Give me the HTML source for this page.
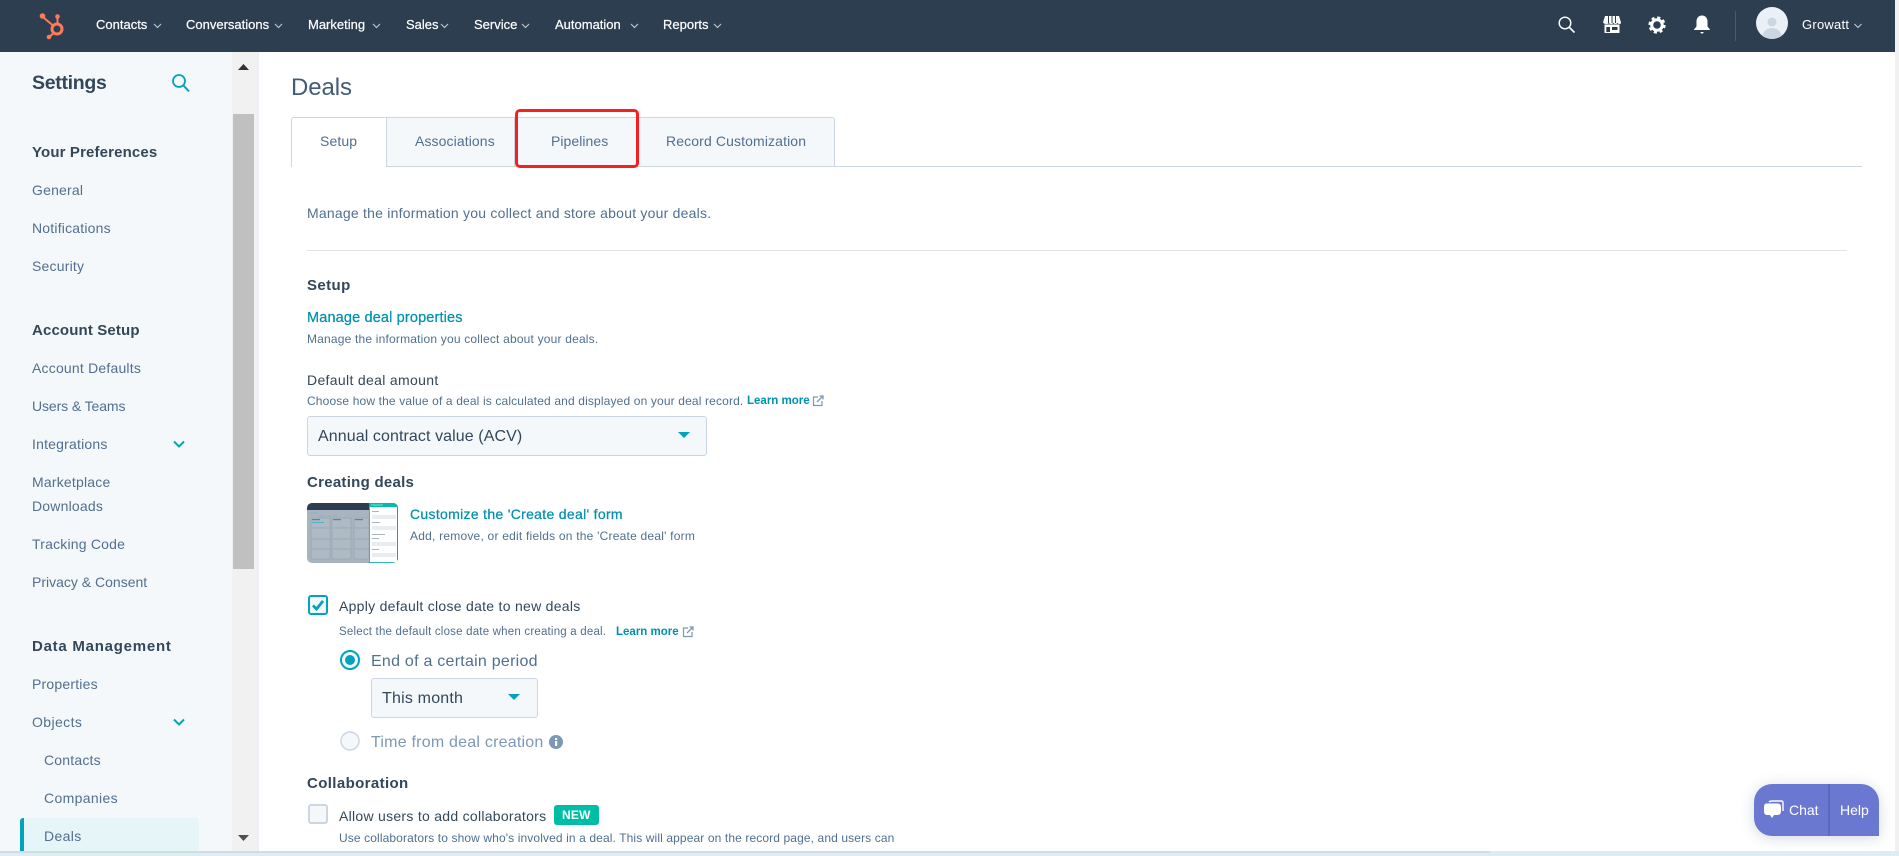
<!DOCTYPE html>
<html><head><meta charset="utf-8"><title>Deals</title>
<style>
html,body{margin:0;padding:0}
body{width:1899px;height:856px;overflow:hidden;position:relative;background:#fff;font-family:"Liberation Sans",sans-serif;color:#33475b}
div,a,span.t{box-sizing:border-box}
.t{position:absolute;white-space:nowrap;line-height:20px}
.n{color:#fff;font-size:13px;top:15px;letter-spacing:0;-webkit-text-stroke:.2px #fff}
.s{font-size:14px;color:#516f90;letter-spacing:.2px;left:32px}
.h{font-size:15px;font-weight:bold;color:#33475b;letter-spacing:.14px;left:32px}
.sub{font-size:12px;color:#516f90}
.l{color:#0091ae}
.box{position:absolute;background:#f5f8fa;border:1px solid #cbd6e2;border-radius:3px}
.tab{position:absolute;top:117px;height:50px;background:#f5f8fa;border:1px solid #cbd6e2;border-left:0}
.tt{font-size:14px;color:#516f90;letter-spacing:.1px;top:131px}
.caret{position:absolute;width:0;height:0;border-left:6.5px solid transparent;border-right:6.5px solid transparent;border-top:6.5px solid #00a4bd}
svg{position:absolute;overflow:visible}
</style></head><body>

<!-- top nav -->
<div style="position:absolute;left:0;top:0;width:1895px;height:52px;background:#2d3e50"></div>
<svg style="left:38px;top:12px" width="30" height="30" viewBox="38 12 30 30"><g fill="none" stroke="#ff7a59"><circle cx="57" cy="29" r="5" stroke-width="3"/><path d="M57.500 18V24M44 18L53 25.500M50 36.500L54 32.500" stroke-width="2"/></g><g fill="#ff7a59"><circle cx="57.500" cy="16.500" r="2.300"/><circle cx="42.500" cy="16" r="2.800"/><circle cx="49" cy="37" r="2.300"/></g></svg>

<span class="t n" style="left:96px">Contacts</span>
<span class="t n" style="left:186px">Conversations</span>
<span class="t n" style="left:308px">Marketing</span>
<span class="t n" style="left:406px">Sales</span>
<span class="t n" style="left:474px">Service</span>
<span class="t n" style="left:555px">Automation</span>
<span class="t n" style="left:663px">Reports</span>
<svg style="left:0;top:0" width="800" height="52"><g fill="none" stroke="#b7c3cf" stroke-width="1.200"><path d="M154 24l3.500 3.500 3.500-3.500M275 24l3.500 3.500 3.500-3.500M373 24l3.500 3.500 3.500-3.500M441 24l3.500 3.500 3.500-3.500M522 24l3.500 3.500 3.500-3.500M631 24l3.500 3.500 3.500-3.500M714 24l3.500 3.500 3.500-3.500"/></g></svg>

<!-- top right icons -->
<svg style="left:1558px;top:16px" width="18" height="18" viewBox="0 0 18 18"><circle cx="7" cy="7" r="5.800" fill="none" stroke="#fff" stroke-width="1.400"/><path d="M11.200 11.200L16.500 16.500" stroke="#fff" stroke-width="1.600"/></svg>
<svg style="left:1603px;top:16px" width="18" height="18" viewBox="0 0 18 18"><path d="M2 0H16L18 6.500Q18 8 16.500 8Q15 8 14.500 7Q13.500 8 12.500 8Q11 8 10.500 7Q9.500 8 8 8Q6.500 8 6 7Q5 8 3.500 8Q1 8 0 6.500Z" fill="#fff"/><path d="M5.500 0V7M9 0V7M12.500 0V7" stroke="#2d3e50" stroke-width="1"/><path d="M1.500 8.500H16.500V17H1.500ZM3.300 11V16H7V11ZM9 11V14H14.500V11Z" fill="#fff" fill-rule="evenodd"/></svg>
<svg style="left:1648px;top:16px" width="18" height="18" viewBox="0 0 18 18"><circle cx="9" cy="9" r="5.300" fill="none" stroke="#fff" stroke-width="3"/><circle cx="9" cy="9" r="7.400" fill="none" stroke="#fff" stroke-width="2.400" stroke-dasharray="3.100 2.710"/></svg>
<svg style="left:1693px;top:15px" width="18" height="20" viewBox="0 0 18 20"><path d="M9 0.500C5.500 0.500 3.500 3 3.500 6.500V11C3.500 12.500 1 13.500 1 15H17C17 13.500 14.500 12.500 14.500 11V6.500C14.500 3 12.500 0.500 9 0.500Z" fill="#fff"/><path d="M7 17H11L9 19Z" fill="#fff"/></svg>
<div style="position:absolute;left:1735px;top:11px;width:1px;height:30px;background:#425b76"></div>
<svg style="left:1756px;top:7px" width="32" height="32" viewBox="0 0 32 32"><defs><clipPath id="av"><circle cx="16" cy="16" r="16"/></clipPath></defs><circle cx="16" cy="16" r="16" fill="#eaf0f6"/><g clip-path="url(#av)" fill="#cbd6e2"><circle cx="16" cy="15" r="4.500"/><ellipse cx="16" cy="31" rx="10" ry="10"/></g></svg>
<span class="t" style="left:1802px;top:15px;font-size:13px;color:#fff;letter-spacing:.25px">Growatt</span>
<svg style="left:0;top:0" width="1899" height="52"><path d="M1854.500 24l3.500 3.500 3.500-3.500" fill="none" stroke="#b7c3cf" stroke-width="1.200"/></svg>

<!-- sidebar -->
<div style="position:absolute;left:0;top:52px;width:232px;height:799px;background:#f5f8fa"></div>
<div style="position:absolute;left:232px;top:52px;width:25px;height:799px;background:#f1f1f1"></div>
<div style="position:absolute;left:257px;top:52px;width:2px;height:799px;background:#eaf0f6"></div>
<div style="position:absolute;left:233px;top:114px;width:21px;height:455px;background:#c0c0c0"></div>
<svg style="left:232px;top:52px" width="25" height="799"><path d="M6 18L11.500 12L17 18Z" fill="#333"/><path d="M6 783L11.500 789L17 783Z" fill="#505050"/></svg>

<span class="t" style="left:32px;top:73px;font-size:19.500px;font-weight:bold;color:#33475b;letter-spacing:-.3px">Settings</span>
<svg style="left:171px;top:73px" width="20" height="20" viewBox="0 0 20 20"><circle cx="8" cy="8" r="6" fill="none" stroke="#00a4bd" stroke-width="1.800"/><path d="M12.500 12.500L18 18.500" stroke="#00a4bd" stroke-width="2"/></svg>

<span class="t h" style="top:143px">Your Preferences</span>
<span class="t s" style="top:180px">General</span>
<span class="t s" style="top:218px">Notifications</span>
<span class="t s" style="top:256px">Security</span>
<span class="t h" style="top:321px">Account Setup</span>
<span class="t s" style="top:358px">Account Defaults</span>
<span class="t s" style="top:396px;letter-spacing:-.1px">Users &amp; Teams</span>
<span class="t s" style="top:434px">Integrations</span>
<span class="t s" style="top:472px">Marketplace</span>
<span class="t s" style="top:496px">Downloads</span>
<span class="t s" style="top:534px">Tracking Code</span>
<span class="t s" style="top:572px;letter-spacing:0">Privacy &amp; Consent</span>
<span class="t h" style="top:637px;letter-spacing:.75px">Data Management</span>
<span class="t s" style="top:674px">Properties</span>
<span class="t s" style="top:712px;letter-spacing:.4px">Objects</span>
<div style="position:absolute;left:20px;top:818px;width:179px;height:33px;background:#e5f5f8;border-left:4px solid #00a4bd;border-radius:3px 3px 0 0"></div>
<span class="t s" style="left:44px;top:750px">Contacts</span>
<span class="t s" style="left:44px;top:788px;letter-spacing:.35px">Companies</span>
<span class="t s" style="left:44px;top:826px;letter-spacing:.35px">Deals</span>
<svg style="left:0;top:0" width="232" height="800"><path d="M174 441.500L179 446.500L184 441.500M174 719.500L179 724.500L184 719.500" fill="none" stroke="#00a4bd" stroke-width="2"/></svg>

<!-- main -->
<span class="t" style="left:291px;top:73px;font-size:24px;line-height:30px;color:#425b76;letter-spacing:-.1px">Deals</span>

<div class="tab" style="left:291px;width:96px;background:#fff;border-left:1px solid #cbd6e2;border-bottom:0;border-radius:3px 0 0 0"></div>
<div class="tab" style="left:387px;width:128px"></div>
<div class="tab" style="left:515px;width:122px"></div>
<div class="tab" style="left:637px;width:198px;border-radius:0 3px 0 0"></div>
<div style="position:absolute;left:835px;top:166px;width:1027px;height:1px;background:#cbd6e2"></div>
<span class="t tt" style="left:320px">Setup</span>
<span class="t tt" style="left:415px">Associations</span>
<span class="t tt" style="left:551px;letter-spacing:.05px">Pipelines</span>
<span class="t tt" style="left:666px;letter-spacing:.12px">Record Customization</span>
<div style="position:absolute;left:515px;top:109px;width:124px;height:59px;border:3.500px solid #f5201f;border-radius:5px"></div>

<span class="t" style="left:307px;top:203px;font-size:14px;color:#516f90;letter-spacing:.22px">Manage the information you collect and store about your deals.</span>
<div style="position:absolute;left:307px;top:250px;width:1540px;height:1px;background:#dfe3eb"></div>

<span class="t" style="left:307px;top:276px;font-size:15px;font-weight:bold;color:#33475b;letter-spacing:.4px">Setup</span>
<span class="t l" style="left:307px;top:308px;font-size:14.500px;letter-spacing:.15px;-webkit-text-stroke:.25px #0091ae">Manage deal properties</span>
<span class="t sub" style="left:307px;top:329px;letter-spacing:.19px">Manage the information you collect about your deals.</span>
<span class="t" style="left:307px;top:370px;font-size:14px;color:#33475b;letter-spacing:.33px">Default deal amount</span>
<span class="t sub" style="left:307px;top:391px;letter-spacing:.145px">Choose how the value of a deal is calculated and displayed on your deal record.</span>
<span class="t l" style="left:747px;top:391px;font-size:11.500px;font-weight:bold">Learn more</span>
<svg style="left:812px;top:395px" width="12" height="12" viewBox="0 0 12 12"><path d="M6 2H1.500V10.500H10V6" fill="none" stroke="#7c98b6" stroke-width="1.200"/><path d="M5 7L10.500 1.500M7.500 1H11V4.500" fill="none" stroke="#7c98b6" stroke-width="1.300"/></svg>

<div class="box" style="left:307px;top:416px;width:400px;height:40px"></div>
<span class="t" style="left:318px;top:427px;font-size:16px;color:#33475b;letter-spacing:.09px">Annual contract value (ACV)</span>
<div class="caret" style="left:678px;top:432px"></div>

<span class="t" style="left:307px;top:473px;font-size:15px;font-weight:bold;color:#33475b;letter-spacing:.27px">Creating deals</span>

<svg style="left:307px;top:503px" width="91" height="60" viewBox="0 0 91 60"><defs><clipPath id="th"><rect width="91" height="60" rx="5"/></clipPath></defs><g clip-path="url(#th)"><rect width="91" height="60" fill="#a8b4bf"/><rect width="62" height="7" fill="#2d3e50"/><path d="M3 10H11M12 13H17M20 13H24M25 13H30" stroke="#7fb4c2" stroke-width=".8"/><g fill="#aebac4" stroke="#9aa7b3" stroke-width=".8"><rect x="4" y="15" width="19" height="10"/><rect x="4" y="25" width="19" height="11"/><rect x="4" y="36" width="19" height="10"/><rect x="4" y="46" width="19" height="10"/><rect x="25" y="15" width="19" height="10"/><rect x="25" y="25" width="19" height="11"/><rect x="25" y="36" width="19" height="10"/><rect x="25" y="46" width="19" height="10"/><rect x="47" y="15" width="15" height="10"/><rect x="47" y="25" width="15" height="11"/><rect x="47" y="36" width="15" height="10"/><rect x="47" y="46" width="15" height="10"/></g><g fill="#6f7c89"><rect x="5" y="16" width="8" height="1.200"/><rect x="26" y="16" width="8" height="1.200"/><rect x="48" y="16" width="8" height="1.200"/></g><path d="M5 19.500H17" stroke="#4fb4c8"/><rect x="62" width="29" height="60" fill="#00a4bd"/><rect x="62.800" y="4" width="27.200" height="55.200" fill="#fff"/><rect x="62" width="29" height="4" fill="#00bda5"/><path d="M64 2H76" stroke="#7fded2"/><g fill="#e9edf2"><rect x="65" y="12" width="24" height="4"/><rect x="65" y="23" width="24" height="4"/><rect x="65" y="39" width="24" height="4"/><rect x="65" y="50" width="24" height="4"/></g><path d="M65 8.500H72M65 19.500H73M65 31.500H78M65 35.500H72M65 46.500H72" stroke="#aab4be"/></g></svg>
<span class="t l" style="left:410px;top:504px;font-size:14px;letter-spacing:.31px;-webkit-text-stroke:.25px #0091ae">Customize the 'Create deal' form</span>
<span class="t sub" style="left:410px;top:526px;letter-spacing:.22px">Add, remove, or edit fields on the 'Create deal' form</span>

<!-- checkbox 1 -->
<div style="position:absolute;left:308px;top:595px;width:20px;height:20px;border:2px solid #00a4bd;border-radius:3px;background:#f5f8fa"></div>
<svg style="left:308px;top:595px" width="20" height="20"><path d="M5 10.500L8.500 14L15 6" fill="none" stroke="#00a4bd" stroke-width="2.800"/></svg>
<span class="t" style="left:339px;top:596px;font-size:14px;color:#33475b;letter-spacing:.28px">Apply default close date to new deals</span>
<span class="t sub" style="left:339px;top:622px;font-size:11.500px;letter-spacing:.2px">Select the default close date when creating a deal.</span>
<span class="t l" style="left:616px;top:622px;font-size:11.500px;font-weight:bold">Learn more</span>
<svg style="left:682px;top:626px" width="12" height="12" viewBox="0 0 12 12"><path d="M6 2H1.500V10.500H10V6" fill="none" stroke="#7c98b6" stroke-width="1.200"/><path d="M5 7L10.500 1.500M7.500 1H11V4.500" fill="none" stroke="#7c98b6" stroke-width="1.300"/></svg>

<!-- radios -->
<svg style="left:340px;top:650px" width="20" height="20"><circle cx="10" cy="10" r="9" fill="#f5f8fa" stroke="#00a4bd" stroke-width="2"/><circle cx="10" cy="10" r="5" fill="#00a4bd"/></svg>
<span class="t" style="left:371px;top:652px;font-size:16px;color:#516f90;letter-spacing:.25px">End of a certain period</span>
<div class="box" style="left:371px;top:678px;width:167px;height:40px"></div>
<span class="t" style="left:382px;top:689px;font-size:16px;color:#33475b;letter-spacing:.2px">This month</span>
<div class="caret" style="left:508px;top:694px"></div>
<svg style="left:340px;top:731px" width="20" height="20"><circle cx="10" cy="10" r="9" fill="#f5f8fa" stroke="#cbd6e2" stroke-width="1.500"/></svg>
<span class="t" style="left:371px;top:733px;font-size:16px;color:#7c98b6;letter-spacing:.22px">Time from deal creation</span>
<svg style="left:549px;top:735px" width="14" height="14"><circle cx="7" cy="7" r="7" fill="#7c98b6"/><rect x="6" y="6" width="2.200" height="5" fill="#fff"/><rect x="6" y="3" width="2.200" height="2" fill="#fff"/></svg>

<span class="t" style="left:307px;top:774px;font-size:15px;font-weight:bold;color:#33475b;letter-spacing:.38px">Collaboration</span>
<div style="position:absolute;left:308px;top:804px;width:20px;height:20px;border:2px solid #cbd6e2;border-radius:3px;background:#f5f8fa"></div>
<span class="t" style="left:339px;top:806px;font-size:14px;color:#33475b;letter-spacing:.28px">Allow users to add collaborators</span>
<div style="position:absolute;left:554px;top:805px;width:45px;height:20px;background:#00bda5;border-radius:3px"></div>
<span class="t" style="left:562px;top:805px;font-size:12px;font-weight:bold;color:#fff;letter-spacing:.2px">NEW</span>
<span class="t sub" style="left:339px;top:828px;letter-spacing:.115px">Use collaborators to show who's involved in a deal. This will appear on the record page, and users can</span>

<!-- chat -->
<div style="position:absolute;left:1754px;top:784px;width:125px;height:52px;background:#6a78d1;border-radius:18px 18px 0 18px;box-shadow:0 2px 14px rgba(60,80,110,.22)"></div>
<div style="position:absolute;left:1828px;top:784px;width:2px;height:52px;background:#5c68bd"></div>
<svg style="left:1763px;top:800px" width="22" height="20" viewBox="0 0 22 20"><path d="M6 2Q7 1 10 1H18Q20 1 20 3V11" fill="none" stroke="#fff" stroke-width="1.400"/><path d="M3.500 3.500H14.500Q18 3.500 18 7V11Q18 15 14.500 15H11L9 18L7 15H4Q1 15 1 11V7Q1 3.500 3.500 3.500Z" fill="#fff"/></svg>
<span class="t" style="left:1789px;top:800px;font-size:14px;color:#fff">Chat</span>
<span class="t" style="left:1840px;top:800px;font-size:14px;color:#fff">Help</span>

<!-- scrollbars / bottom strip -->
<div style="position:absolute;left:1895px;top:0;width:4px;height:851px;background:#f1f1f1"></div>
<div style="position:absolute;left:0;top:851px;width:1899px;height:5px;background:#dcedf3"></div>
<div style="position:absolute;left:0;top:851px;width:1490px;height:2px;background:#cfdde5"></div>
</body></html>
